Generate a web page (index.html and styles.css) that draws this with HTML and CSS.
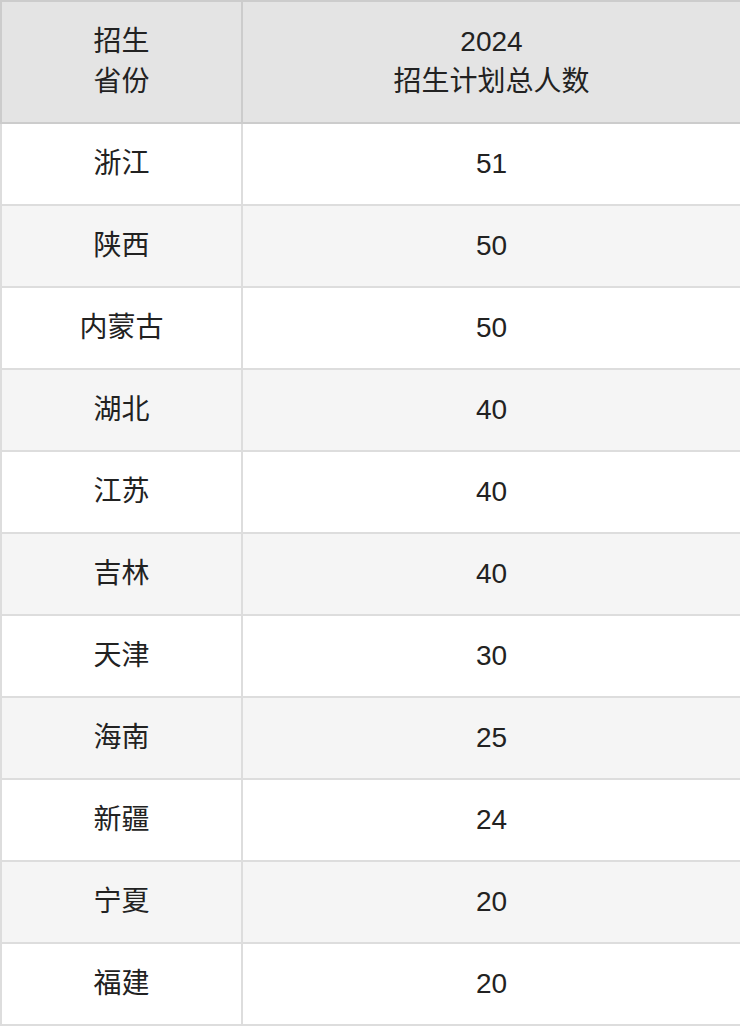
FILE: index.html
```html
<!DOCTYPE html>
<html lang="zh">
<head>
<meta charset="utf-8">
<link rel="stylesheet" href="styles.css">
</head>
<body>
<table class="plan">
  <colgroup><col class="c1"><col class="c2"></colgroup>
  <thead>
    <tr><th>招生<br>省份</th><th>2024<br>招生计划总人数</th></tr>
  </thead>
  <tbody>
    <tr><td>浙江</td><td>51</td></tr>
    <tr><td>陕西</td><td>50</td></tr>
    <tr><td>内蒙古</td><td>50</td></tr>
    <tr><td>湖北</td><td>40</td></tr>
    <tr><td>江苏</td><td>40</td></tr>
    <tr><td>吉林</td><td>40</td></tr>
    <tr><td>天津</td><td>30</td></tr>
    <tr><td>海南</td><td>25</td></tr>
    <tr><td>新疆</td><td>24</td></tr>
    <tr><td>宁夏</td><td>20</td></tr>
    <tr><td>福建</td><td>20</td></tr>
  </tbody>
</table>
</body>
</html>
```
FILE: styles.css
```css
html, body {
  margin: 0;
  padding: 0;
  background: #fff;
}
.plan {
  width: 740px;
  border-collapse: collapse;
  table-layout: fixed;
  font-family: "Liberation Sans", "Noto Sans CJK SC", sans-serif;
  font-size: 28px;
  line-height: 40px;
  color: #222;
  border: 2px solid #dddddd;
}
.c1 { width: 241px; }
.c2 { width: 499px; }
.plan th {
  background: #e4e4e4;
  border: 2px solid #cccccc;
  font-weight: normal;
  padding: 20px 0;
  height: 80px;
  text-align: center;
}
.plan td {
  border: 2px solid #dddddd;
  padding: 20px 0;
  height: 40px;
  text-align: center;
}
.plan tbody tr:nth-child(even) td {
  background: #f5f5f5;
}
```
